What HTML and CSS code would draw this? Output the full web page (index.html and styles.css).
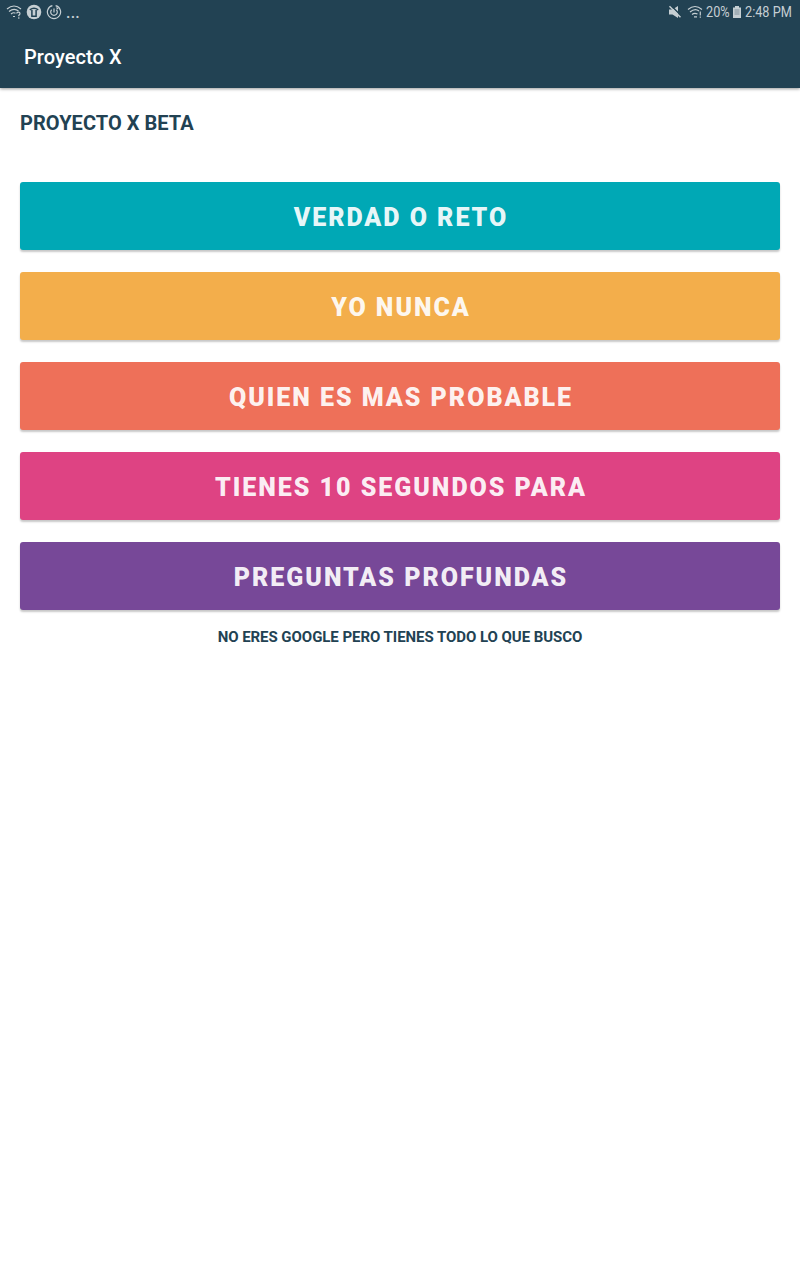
FILE: index.html
```html
<!DOCTYPE html>
<html lang="es">
<head>
<meta charset="utf-8">
<title>Proyecto X</title>
<link rel="stylesheet" href="styles.css">
</head>
<body>
<header class="top">
  <div class="status">
    <div class="status-left">
      <svg class="icon" viewBox="0 0 16 16"><path d="M1 5Q8-1 15 5M3 7.500Q8 3.300 12.500 7M5 10Q7.500 8 9.500 9.200M7 12.500h2"/><path d="M10.800 9.600q0-1.400 1.600-1.400t1.600 1.400q0 1-1.200 1.700v1M12.800 13.300v1.400"/></svg>
      <svg class="icon" viewBox="0 0 16 16"><circle class="fill" cx="8" cy="8" r="7.300"/><path class="cut" d="M3.800 5.800Q8 2.600 12.200 5.800M5.900 6v6.300h4.200V6"/></svg>
      <svg class="icon" viewBox="0 0 16 16"><path d="M6.400 1.600A6.600 6.600 0 1 0 9.600 1.600"/><path d="M5.700 5.700a3.300 3.300 0 1 0 4.600 0M8 4.500v4M10.500 3.500l1.500 1.500"/></svg>
      <span class="dots">...</span>
    </div>
    <div class="status-right">
      <svg class="icon mute" viewBox="0 0 16 16"><path class="fill" d="M2 5.500h3.500L11 2v12l-5.500-3.500H2z"/><path class="cut" d="M4 1.500l11 11"/><path class="slash" d="M2.500 2.300l11 11"/></svg>
      <svg class="icon wifi" viewBox="0 0 16 16"><path d="M1 5.500Q8-.5 15 5.500M3 8Q8 3.800 12 7M5 10.500Q7.500 8.400 10.500 10M7 12.800h3M13.300 7.500v4M13.300 12.500v1.300"/></svg>
      <span class="battery-text"><span class="narrow">20%</span></span>
      <svg class="battery" viewBox="0 0 8 12"><path class="fill" d="M2 0h4v1.500h2V12H0V1.500h2z"/><path class="level" d="M1.500 3h5v6h-5z"/></svg>
      <span class="time"><span class="narrow">2:48 PM</span></span>
    </div>
  </div>
  <div class="title">Proyecto X</div>
</header>
<main class="content">
  <h1 class="heading">PROYECTO X BETA</h1>
  <nav class="menu">
    <button class="btn teal">VERDAD O RETO</button>
    <button class="btn amber">YO NUNCA</button>
    <button class="btn coral">QUIEN ES MAS PROBABLE</button>
    <button class="btn pink">TIENES 10 SEGUNDOS PARA</button>
    <button class="btn purple">PREGUNTAS PROFUNDAS</button>
  </nav>
  <p class="phrase">NO ERES GOOGLE PERO TIENES TODO LO QUE BUSCO</p>
</main>
</body>
</html>
```
FILE: styles.css
```css
* { box-sizing: border-box; }
body { margin: 0; min-height: 1280px; background: #fff; font-family: Roboto, sans-serif; color: #224253; }
.top { height: 88px; background: #224253; box-shadow: 0 1px 3px rgba(0,0,0,.4); color: #fff; }
.status { height: 24px; display: flex; justify-content: space-between; padding: 0 8px 0 6px; color: #c6cfd3; }
.status-left, .status-right { display: flex; align-items: center; }
.status-left { gap: 4px; }
.icon { width: 16px; height: 16px; fill: none; stroke: #c6cfd3; stroke-width: 1.2; }
.icon .fill, .battery .fill { fill: #c6cfd3; stroke: none; }
.icon .cut { stroke: #224253; stroke-width: 1.5; }
.icon .slash { stroke-width: 1.5; }
.mute { margin-right: 4px; }
.wifi { margin-right: 3px; }
.battery { width: 8px; height: 12px; margin: 0 4px; }
.battery .level { fill: #a3b0b7; }
.dots { font-size: 16px; font-weight: 500; letter-spacing: .2px; }
.battery-text, .time { font-size: 15.500px; line-height: 24px; white-space: nowrap; }
.battery-text { width: 23px; }
.time { width: 47px; }
.narrow { display: inline-block; transform: scaleX(.82); transform-origin: left; }
.title { height: 64px; padding: 0 24px; font-size: 20px; font-weight: 500; letter-spacing: .08px; line-height: 66px; }
.content { padding: 20px 20px 0; }
.heading { margin: 0; font-size: 20px; line-height: 30px; font-weight: 700; letter-spacing: .04px; }
.menu { display: grid; gap: 22px; margin-top: 44px; }
.btn { height: 68px; border: 0; border-radius: 3px; padding: 4px 0 0 2px; font: 900 25px/30px Roboto, sans-serif; letter-spacing: 1.970px; color: rgba(255,255,255,.93); box-shadow: 0 2px 2px rgba(0,0,0,.22); }
.teal { background: #00a8b5; }
.amber { background: #f3ae4b; }
.coral { background: #ee7059; }
.pink { background: #de4383; }
.purple { background: #774898; }
.phrase { margin: 17px 0 0; text-align: center; font-size: 15px; line-height: 20px; font-weight: 700; letter-spacing: -.05px; }
```
